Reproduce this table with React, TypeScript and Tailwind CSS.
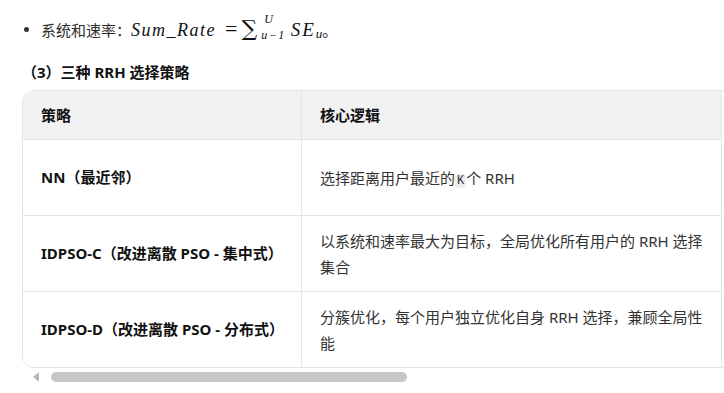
import type { ReactNode } from "react";

const rows: { id: number; name: string; logic: ReactNode }[] = [
  {
    id: 1,
    name: "NN（最近邻）",
    logic: (
      <>
        选择距离用户最近的
        <code className="rounded-[4px] bg-[#ededed] px-[2px] text-[12px] leading-[14px] font-[family-name:'Liberation_Mono',monospace] text-[#333]">
          K
        </code>
        个 RRH
      </>
    ),
  },
  {
    id: 2,
    name: "IDPSO-C（改进离散 PSO - 集中式）",
    logic: (
      <>
        以系统和速率最大为目标，全局优化所有用户的 RRH 选择
        <br />
        集合
      </>
    ),
  },
  {
    id: 3,
    name: "IDPSO-D（改进离散 PSO - 分布式）",
    logic: (
      <>
        分簇优化，每个用户独立优化自身 RRH 选择，兼顾全局性
        <br />
        能
      </>
    ),
  },
];

const serif = "font-[family-name:'Liberation_Serif','DejaVu_Serif',serif]";

const Formula = () => (
  <span className="flex items-baseline text-[#111]">
    <span className={`${serif} italic text-[18px] tracking-[1.5px]`}>Sum_Rate</span>
    <span className={`${serif} text-[22px] ml-[9px] mr-[4px]`}>=</span>
    <span className="font-[family-name:'DejaVu_Serif',serif] text-[22px]">∑</span>
    <span className={`${serif} italic self-start mt-[-3px] flex flex-col items-start h-[28px] justify-between text-[12px] leading-none ml-[4px]`}>
      <span className="ml-[3px]">U</span>
      <span className="tracking-[1.5px]">u−1</span>
    </span>
    <span className={`${serif} italic text-[19px] tracking-[2px] ml-[5px]`}>SE</span>
    <span className={`${serif} italic text-[13px] relative top-[2px]`}>u</span>
    <span>。</span>
  </span>
);

const App = () => {
  return (
    <div className="w-[724px] h-[393px] overflow-hidden bg-white text-[15px] text-[#2b2b2b] font-[family-name:'Noto_Sans','Noto_Sans_CJK_SC',sans-serif]">
      <div className="pt-[16px] pl-[22px]">
        <div className="flex items-baseline h-[26px] leading-[26px]">
          <span className="self-center ml-[2px] mr-[12px] w-[5px] h-[5px] rounded-full bg-[#333]" />
          <span>系统和速率：</span>
          <Formula />
        </div>

        <h4 className="mt-[20px] h-[20px] leading-[20px] text-[15px] font-bold text-[#111]">
          （3）三种 RRH 选择策略
        </h4>

        <div className="mt-[8px] w-[760px] border border-[#e5e5e5] rounded-[12px] overflow-hidden">
          <div className="grid grid-cols-[279px_420px]">
            <div className="h-[49px] flex items-center px-[18px] bg-[#f2f2f2] border-b border-r border-[#e5e5e5] font-bold text-[#111]">
              策略
            </div>
            <div className="h-[49px] flex items-center px-[18px] bg-[#f2f2f2] border-b border-r border-[#e5e5e5] font-bold text-[#111]">
              核心逻辑
            </div>
            {rows.map((row, i) => (
              <div key={row.id} className="contents">
                <div
                  className={`${i === rows.length - 1 ? "h-[75px]" : "h-[76px] border-b"} flex items-center px-[18px] border-r border-[#e5e5e5] font-bold text-[#111] whitespace-nowrap`}
                >
                  {row.name}
                </div>
                <div
                  className={`${i === rows.length - 1 ? "h-[75px]" : "h-[76px] border-b"} flex items-center px-[18px] border-r border-[#e5e5e5] leading-[26px] text-[#333] whitespace-nowrap`}
                >
                  <div>{row.logic}</div>
                </div>
              </div>
            ))}
          </div>
        </div>

        <div className="mt-[4px] flex items-center h-[10px] pl-[11px]">
          <span className="w-0 h-0 border-y-[5px] border-y-transparent border-r-[6px] border-r-[#b8b8b8]" />
          <span className="ml-[12px] w-[356px] h-[10px] rounded-full bg-[#c6c6c6]" />
        </div>
      </div>
    </div>
  );
};

export default App;
